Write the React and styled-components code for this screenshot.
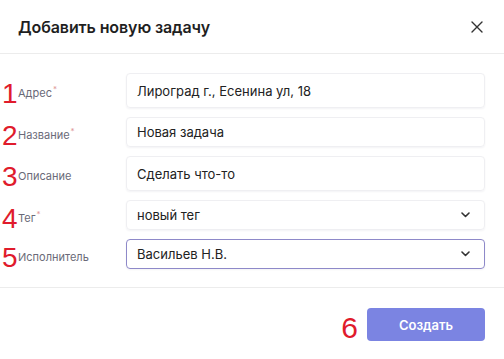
import styled, { createGlobalStyle } from "styled-components";

const GlobalStyle = createGlobalStyle`
    html, body {
        margin: 0;
        padding: 0;
        background: #ffffff;
    }
    body {
        font-family: Inter, "Noto Sans", sans-serif;
    }
`;

const Modal = styled.div`
    width: 504px;
    height: 359px;
    background: #fff;
    display: flex;
    flex-direction: column;
    box-sizing: border-box;
`;

const Header = styled.div`
    height: 53px;
    padding: 0 20px 0 18px;
    display: flex;
    align-items: center;
    justify-content: space-between;
    border-bottom: 1px solid #ececec;
`;

const Title = styled.h2`
    margin: 0;
    font-size: 16px;
    font-weight: 600;
    color: #1f1f1f;
    letter-spacing: -0.1px;
`;

const CloseButton = styled.button`
    border: none;
    background: none;
    padding: 0;
    width: 14px;
    height: 14px;
    display: flex;
    align-items: center;
    justify-content: center;
    cursor: pointer;
`;

const Body = styled.div`
    padding: 19px 19px 18px 0;
    display: flex;
    flex-direction: column;
    gap: 9px;
    border-bottom: 1px solid #ececec;
`;

const Row = styled.div`
    display: grid;
    grid-template-columns: 126px 1fr;
    align-items: center;
`;

const LabelCell = styled.div`
    display: flex;
    align-items: center;
    height: 24px;
    padding-left: 2px;
`;

const Number = styled.span`
    font-family: "Liberation Sans", Arial, sans-serif;
    font-size: 28px;
    line-height: 24px;
    color: #e01b2c;
    width: 16px;
    margin-top: 7px;
`;

const Label = styled.span`
    font-size: 11px;
    line-height: 14px;
    color: #6a6a78;
    margin-top: 5px;
    sup {
        font-size: 8px;
        color: #e09a9a;
        margin-left: 1px;
        vertical-align: 5px;
        line-height: 0;
    }
`;

const Field = styled.div`
    height: ${(p) => p.$h}px;
    box-sizing: border-box;
    border: 1px solid ${(p) => (p.$active ? "#8e89c9" : "#efeff2")};
    border-radius: 4px;
    box-shadow: 0 1px 2px rgba(20, 20, 60, 0.05);
    display: flex;
    align-items: center;
    justify-content: space-between;
    padding: 0 14px 0 10px;
    font-size: 13px;
    color: #222;
`;

const Footer = styled.div`
    flex: 1;
    display: flex;
    justify-content: flex-end;
    align-items: flex-start;
    padding: 20px 19px 0 0;
    gap: 8px;
`;

const SubmitButton = styled.button`
    width: 118px;
    height: 33px;
    border: none;
    border-radius: 4px;
    background: #7b84e2;
    color: #fff;
    font-family: Inter, sans-serif;
    font-size: 13px;
    font-weight: 600;
    cursor: pointer;
`;

const FooterNumber = styled(Number)`
    font-size: 30px;
    width: auto;
    margin-top: 8px;
    margin-right: 1px;
`;

const Chevron = () => (
    <svg width="9" height="6" viewBox="0 0 9 6">
        <polyline
            points="1,1 4.5,4.5 8,1"
            fill="none"
            stroke="#333"
            strokeWidth="1.6"
            strokeLinecap="round"
            strokeLinejoin="round"
        />
    </svg>
);

const fields = [
    { n: 1, label: "Адрес", req: true, value: "Лироград г., Есенина ул, 18", h: 35 },
    { n: 2, label: "Название", req: true, value: "Новая задача", h: 30 },
    { n: 3, label: "Описание", req: false, value: "Сделать что-то", h: 35 },
    { n: 4, label: "Тег", req: true, value: "новый тег", h: 30, select: true },
    { n: 5, label: "Исполнитель", req: false, value: "Васильев Н.В.", h: 30, select: true, active: true },
];

export default function App() {
    return (
        <>
            <GlobalStyle />
            <Modal>
                <Header>
                    <Title>Добавить новую задачу</Title>
                    <CloseButton>
                        <svg width="12" height="12" viewBox="0 0 12 12">
                            <path
                                d="M1 1 L11 11 M11 1 L1 11"
                                stroke="#333"
                                strokeWidth="1.4"
                                strokeLinecap="round"
                            />
                        </svg>
                    </CloseButton>
                </Header>
                <Body>
                    {fields.map((f) => (
                        <Row key={f.n}>
                            <LabelCell>
                                <Number>{f.n}</Number>
                                <Label>
                                    {f.label}
                                    {f.req && <sup>*</sup>}
                                </Label>
                            </LabelCell>
                            <Field $h={f.h} $active={f.active}>
                                <span>{f.value}</span>
                                {f.select && <Chevron />}
                            </Field>
                        </Row>
                    ))}
                </Body>
                <Footer>
                    <FooterNumber>6</FooterNumber>
                    <SubmitButton>Создать</SubmitButton>
                </Footer>
            </Modal>
        </>
    );
}
